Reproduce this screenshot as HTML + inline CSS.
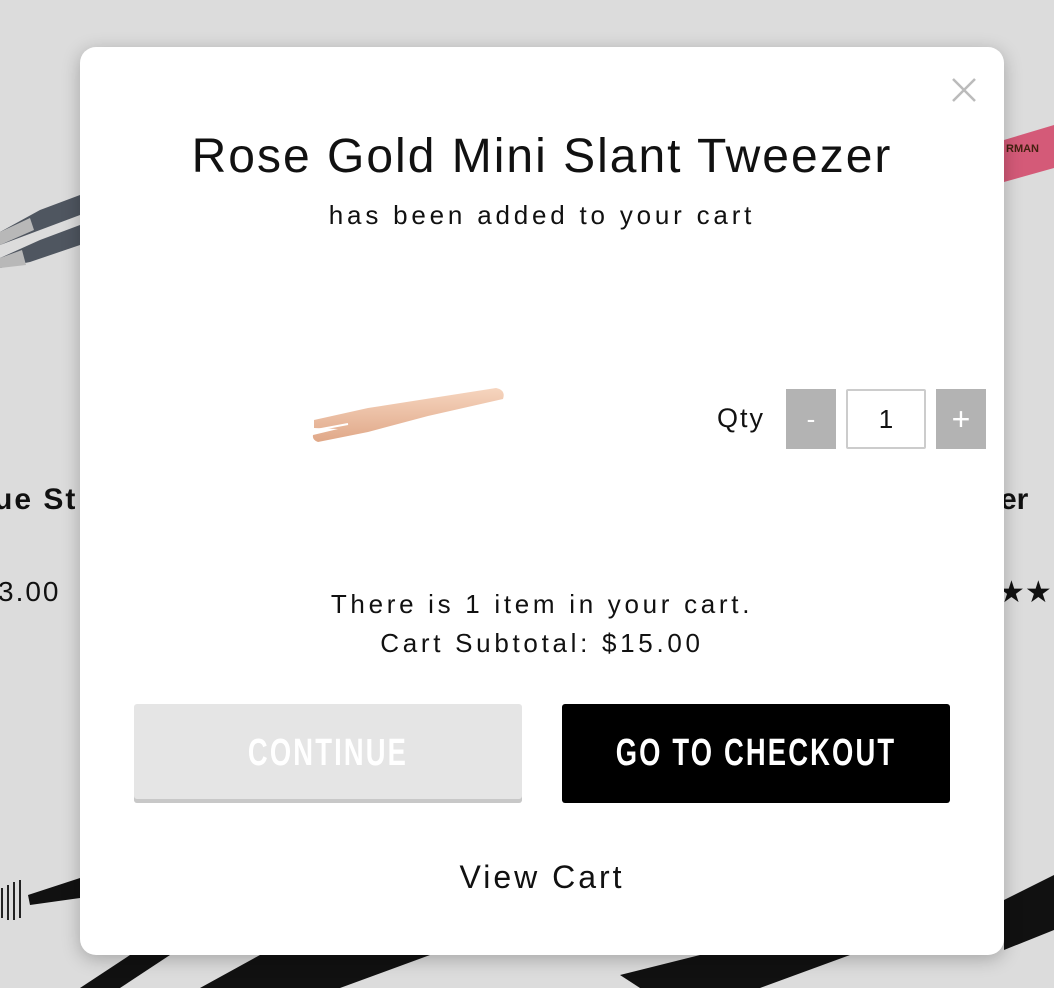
<!DOCTYPE html>
<html><head><meta charset="utf-8"><style>
html,body{margin:0;padding:0}
body{width:1054px;height:988px;background:#dcdcdc;position:relative;overflow:hidden;font-family:"Liberation Sans",sans-serif;color:#111}
.bg{position:absolute}
.modal{position:absolute;left:80px;top:47px;width:924px;height:908px;background:#fff;border-radius:16px;box-shadow:0 4px 18px rgba(0,0,0,.25)}
.t{position:absolute;left:0;width:924px;text-align:center}
.btn{position:absolute;top:657px;width:388px;height:99px;border-radius:3px;color:#fff}
.btn span{position:absolute;left:50%;top:0;line-height:99px;white-space:nowrap;font-family:"Liberation Sans",sans-serif;font-weight:bold;font-size:38px;letter-spacing:3px;transform:translateX(-50%) scaleX(0.72)}
.q{position:absolute;top:342px;width:50px;height:60px;box-sizing:border-box}
</style></head><body>
<svg class="bg" style="left:0;top:0" width="1054" height="988">
 <polygon points="0,232 40,210 80,195 80,215 40,230 0,245" fill="#4f5660"/>
 <polygon points="0,232 30,218 34,230 0,245" fill="#b8b8b8"/>
 <polygon points="0,258 40,240 80,225 80,245 30,262 0,268" fill="#4f5660"/>
 <polygon points="0,258 22,250 26,265 0,268" fill="#b8b8b8"/>
 <polygon points="1004,140 1054,125 1054,168 1004,182" fill="#d45a78"/>
 <text x="1006" y="152" font-size="11" font-weight="bold" fill="#421" font-family="Liberation Sans">RMAN</text>
 <text x="-6" y="509" font-size="30" font-weight="bold" letter-spacing="2" fill="#111">ue St</text>
 <text x="-2" y="601" font-size="28" letter-spacing="2" fill="#111">3.00</text>
 <text x="1000" y="509" font-size="30" font-weight="bold" fill="#111">er</text>
 <text x="998" y="602" font-size="30" fill="#111">★★</text>
 <g stroke="#222" stroke-width="2"><line x1="2" y1="888" x2="2" y2="918"/><line x1="8" y1="885" x2="8" y2="920"/><line x1="14" y1="882" x2="14" y2="920"/><line x1="20" y1="880" x2="20" y2="918"/></g>
 <polygon points="28,895 80,878 80,898 30,905" fill="#111"/>
 <polygon points="80,988 130,955 170,955 120,988" fill="#111"/>
 <polygon points="200,988 260,955 430,955 340,988" fill="#111"/>
 <polygon points="620,975 700,955 850,955 760,988 640,988" fill="#111"/>
 <polygon points="1004,900 1054,875 1054,930 1004,950" fill="#111"/>
</svg>
<div class="modal">
 <svg style="position:absolute;left:872px;top:31px" width="24" height="24"><path d="M1 1L23 23M23 1L1 23" stroke="#bbb" stroke-width="2.5"/></svg>
 <div class="t" style="top:82px;font-size:48px;letter-spacing:2px;line-height:56px">Rose Gold Mini Slant Tweezer</div>
 <div class="t" style="top:152px;font-size:26px;letter-spacing:3.8px;line-height:32px">has been added to your cart</div>
 <svg style="position:absolute;left:228px;top:335px" width="200" height="65">
  <defs><linearGradient id="g" x1="0" y1="0" x2="0" y2="1"><stop offset="0" stop-color="#f6d5bf"/><stop offset="1" stop-color="#e0a888"/></linearGradient></defs>
  <path d="M6 38 L60 26 L188 6 Q198 8 195 17 L120 34 L60 50 L10 60 Q4 58 5 53 L30 47 L6 46Z" fill="url(#g)"/>
  <line x1="8" y1="48" x2="40" y2="42" stroke="#fff" stroke-width="2"/>
 </svg>
 <div style="position:absolute;left:637px;top:356px;font-size:27px;letter-spacing:2px">Qty</div>
 <div class="q" style="left:706px;background:#b3b3b3;color:#fff;font-size:26px;text-align:center;line-height:60px">-</div>
 <div class="q" style="left:766px;width:80px;border:2px solid #ccc;border-radius:2px;text-align:center;line-height:56px;font-size:26px">1</div>
 <div class="q" style="left:856px;background:#b3b3b3;color:#fff;font-size:32px;text-align:center;line-height:60px">+</div>
 <div class="t" style="top:538px;font-size:26px;letter-spacing:3.7px;line-height:39px">There is 1 item in your cart.<br>Cart Subtotal: $15.00</div>
 <div class="btn" style="left:54px;background:#e5e5e5;box-shadow:inset 0 -4px 0 #c8c8c8"><span>CONTINUE</span></div>
 <div class="btn" style="left:482px;background:#000"><span>GO TO CHECKOUT</span></div>
 <div class="t" style="top:810px;font-size:32px;letter-spacing:3px;line-height:40px">View Cart</div>
</div>
</body></html>
